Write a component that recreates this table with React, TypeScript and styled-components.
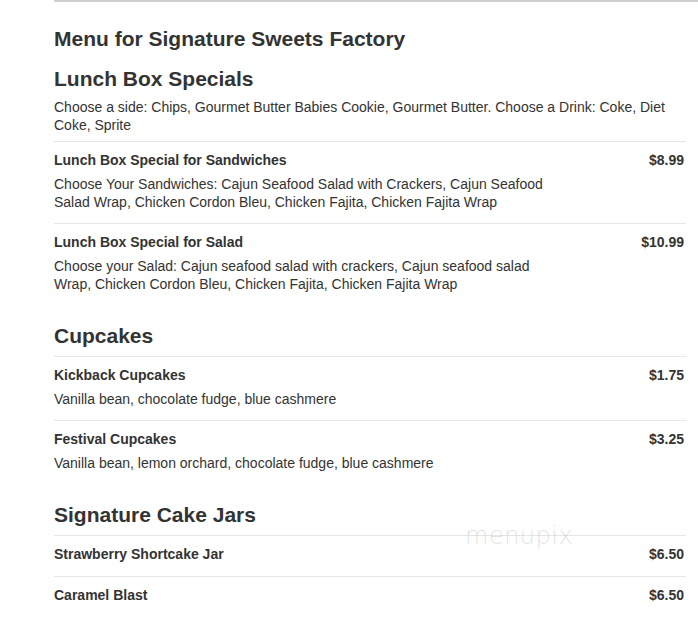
import React from "react";
import styled, { createGlobalStyle } from "styled-components";

const GlobalStyle = createGlobalStyle`
  html, body {
    margin: 0;
    padding: 0;
    background: #ffffff;
  }
  body {
    font-family: "Liberation Sans", Arial, sans-serif;
    color: #333333;
  }
`;

const Page = styled.div`
  position: relative;
  padding: 0 12px 20px 54px;
  overflow: hidden;
`;

const TopRule = styled.div`
  height: 2px;
  background: #cfcfcf;
  margin-right: -12px;
`;

const Title = styled.h1`
  margin: 25px 0 15px;
  font-size: 21px;
  line-height: 24px;
  font-weight: 700;
  color: #333333;
`;

const Section = styled.section`
  & + & {
    margin-top: 18px;
  }
`;

const SectionHeading = styled.h2`
  margin: 0;
  font-size: 21px;
  line-height: 26px;
  font-weight: 700;
  color: #333333;
`;

const SectionNote = styled.p`
  margin: 6px 0 0;
  font-size: 14px;
  line-height: 18px;
  color: #333333;
`;

const ItemList = styled.div`
  margin-top: 7px;
`;

const Item = styled.div<{ $hasDesc: boolean }>`
  display: grid;
  grid-template-columns: 1fr auto;
  column-gap: 16px;
  border-top: 1px solid #e6e6e6;
  padding: 9px 2px ${(p) => (p.$hasDesc ? 12 : 13)}px 0;
`;

const ItemName = styled.div`
  font-size: 14px;
  line-height: 18px;
  font-weight: 700;
  color: #333333;
`;

const Price = styled.div`
  font-size: 14px;
  line-height: 18px;
  font-weight: 700;
  color: #333333;
  text-align: right;
`;

const ItemDesc = styled.div`
  grid-column: 1 / 2;
  margin-top: 6px;
  max-width: 500px;
  font-size: 14px;
  line-height: 18px;
  color: #333333;
`;

const Watermark = styled.div`
  position: absolute;
  left: 465px;
  top: 522px;
  font-family: "DejaVu Sans", sans-serif;
  font-weight: 200;
  font-size: 24px;
  letter-spacing: 0.5px;
  color: rgba(140, 140, 140, 0.25);
  pointer-events: none;
`;

type MenuItem = { name: string; price: string; desc?: string };
type MenuSection = { title: string; note?: string; items: MenuItem[] };

const sections: MenuSection[] = [
  {
    title: "Lunch Box Specials",
    note:
      "Choose a side: Chips, Gourmet Butter Babies Cookie, Gourmet Butter. Choose a Drink: Coke, Diet Coke, Sprite",
    items: [
      {
        name: "Lunch Box Special for Sandwiches",
        price: "$8.99",
        desc:
          "Choose Your Sandwiches: Cajun Seafood Salad with Crackers, Cajun Seafood Salad Wrap, Chicken Cordon Bleu, Chicken Fajita, Chicken Fajita Wrap",
      },
      {
        name: "Lunch Box Special for Salad",
        price: "$10.99",
        desc:
          "Choose your Salad: Cajun seafood salad with crackers, Cajun seafood salad Wrap, Chicken Cordon Bleu, Chicken Fajita, Chicken Fajita Wrap",
      },
    ],
  },
  {
    title: "Cupcakes",
    items: [
      {
        name: "Kickback Cupcakes",
        price: "$1.75",
        desc: "Vanilla bean, chocolate fudge, blue cashmere",
      },
      {
        name: "Festival Cupcakes",
        price: "$3.25",
        desc: "Vanilla bean, lemon orchard, chocolate fudge, blue cashmere",
      },
    ],
  },
  {
    title: "Signature Cake Jars",
    items: [
      { name: "Strawberry Shortcake Jar", price: "$6.50" },
      { name: "Caramel Blast", price: "$6.50" },
    ],
  },
];

export default function App() {
  return (
    <>
      <GlobalStyle />
      <Page>
        <TopRule />
        <Title>Menu for Signature Sweets Factory</Title>
        {sections.map((s) => (
          <Section key={s.title}>
            <SectionHeading>{s.title}</SectionHeading>
            {s.note && <SectionNote>{s.note}</SectionNote>}
            <ItemList>
              {s.items.map((it) => (
                <Item key={it.name} $hasDesc={!!it.desc}>
                  <ItemName>{it.name}</ItemName>
                  <Price>{it.price}</Price>
                  {it.desc && <ItemDesc>{it.desc}</ItemDesc>}
                </Item>
              ))}
            </ItemList>
          </Section>
        ))}
        <Watermark>menupix</Watermark>
      </Page>
    </>
  );
}
